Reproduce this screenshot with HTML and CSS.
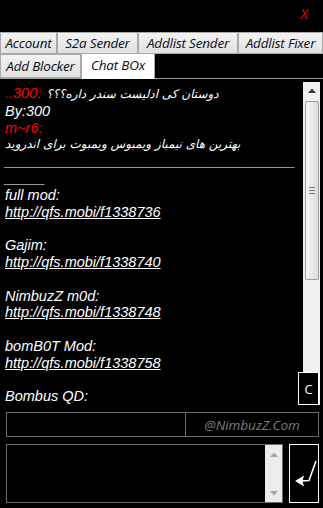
FILE: index.html
```html
<!DOCTYPE html>
<html>
<head>
<meta charset="utf-8">
<link rel="stylesheet" href="styles.css">
</head>
<body>
<div class="titlebar"><span class="close">X</span></div>
<div class="tabs-row1">
  <div class="tab">Account</div>
  <div class="tab">S2a Sender</div>
  <div class="tab">Addlist Sender</div>
  <div class="tab">Addlist Fixer</div>
</div>
<div class="tabs-row2">
  <div class="tab tab-blocker">Add Blocker</div>
  <div class="tab tab-active">Chat BOx</div>
</div>
<div class="chat">
  <div class="log">
    <div class="msgline"><span class="red ltr">..300:</span><span class="fa" dir="rtl">دوستان کی ادلیست سندر داره؟؟؟</span></div>
    <div>By:300</div>
    <div><span class="red">m~r6:</span></div>
    <div class="msgline"><span class="fa" dir="rtl">بهترین های نیمباز ویمبوس ویمبوت برای اندروید</span></div>
    <div class="rule">_________________________________________</div>
    <div>full mod:</div>
    <div><a class="link">http://qfs.mobi/f1338736</a></div>
    <div class="blank"></div>
    <div>Gajim:</div>
    <div><a class="link">http://qfs.mobi/f1338740</a></div>
    <div class="blank"></div>
    <div>NimbuzZ m0d:</div>
    <div><a class="link">http://qfs.mobi/f1338748</a></div>
    <div class="blank"></div>
    <div>bomB0T Mod:</div>
    <div><a class="link">http://qfs.mobi/f1338758</a></div>
    <div class="blank"></div>
    <div>Bombus QD:</div>
  </div>
  <div class="vscroll">
    <div class="sb-btn"><svg width="8" height="5" viewBox="0 0 8 5"><path d="M0 5 L4 0.5 L8 5 Z" fill="#3a3a3a"/></svg></div>
    <div class="thumb"><span class="grip"></span><span class="grip"></span><span class="grip"></span></div>
  </div>
  <div class="cbtn">C</div>
</div>
<div class="nick">
  <div class="nick-left"></div>
  <div class="nick-right">@NimbuzZ.Com</div>
</div>
<div class="compose">
  <div class="msg">
    <div class="msg-sb">
      <svg width="8" height="5" viewBox="0 0 8 5"><path d="M0 5 L4 0.5 L8 5 Z" fill="#a6a6a6"/></svg>
      <svg width="8" height="5" viewBox="0 0 8 5"><path d="M0 0 L4 4.5 L8 0 Z" fill="#a6a6a6"/></svg>
    </div>
  </div>
  <div class="send">
    <svg width="28" height="57" viewBox="0 0 28 57">
      <path d="M5 36 L14 30.5 L12.5 36 L14 41.5 Z" fill="#fff"/>
      <path d="M12 36 L19 35.5 L26 16" fill="none" stroke="#fff" stroke-width="1.6"/>
    </svg>
  </div>
</div>
</body>
</html>
```
FILE: styles.css
```css
* { box-sizing: border-box; }
body {
  margin: 0;
  width: 323px;
  height: 508px;
  overflow: hidden;
  background: #000;
  font-family: "Liberation Sans", Arial, sans-serif;
}
.titlebar {
  height: 32px;
  display: flex;
  justify-content: flex-end;
  padding: 3px 15px 0 0;
}
.close {
  color: #e00000;
  font: italic 15px/20px "Open Sans", sans-serif;
}
.tabs-row1 {
  display: grid;
  grid-template-columns: 57px 81px 100px 1fr;
  height: 22px;
}
.tab {
  border: 1px solid #a9a9a9;
  background: linear-gradient(#f3f3f3, #e0e0e0);
  color: #0a0a14;
  font: italic 13.5px "Open Sans", sans-serif;
  letter-spacing: -0.2px;
  display: flex;
  align-items: center;
  justify-content: center;
  white-space: nowrap;
}
.tabs-row2 {
  display: flex;
  height: 25px;
  border-bottom: 1px solid #9a9a9a;
}
.tab-blocker {
  width: 81px;
  height: 24px;
}
.tab-active {
  width: 74px;
  height: 26px;
  margin-top: -1px;
  background: #fff;
  border-bottom: none;
  padding-bottom: 3px;
}
.chat {
  position: relative;
  height: 326px;
  display: flex;
}
.log {
  flex: 1;
  padding: 6px 3px 0 5px;
  color: #fff;
  font: italic 14.5px/16.8px "Liberation Sans", Arial, sans-serif;
  overflow: hidden;
}
.msgline {
  display: flex;
  justify-content: flex-start;
  align-items: baseline;
  gap: 5px;
  direction: ltr;
}
.ltr {
  direction: ltr;
  unicode-bidi: bidi-override;
}
.red { color: #ff0000; }
.fa {
  font-family: "DejaVu Sans", sans-serif;
  font-size: 12px;
  color: #fff;
}
.rule { word-break: break-all; }
.blank { height: 16.8px; }
.link { color: #fff; text-decoration: underline; }
.vscroll {
  width: 17px;
  margin: 3px 3px 0 0;
  background: #f0f0f0;
  display: flex;
  flex-direction: column;
}
.sb-btn {
  height: 17px;
  display: flex;
  align-items: center;
  justify-content: center;
}
.thumb {
  height: 179px;
  margin: 2px 1px 0 2px;
  border: 1px solid #9d9d9d;
  border-radius: 2px;
  background: linear-gradient(90deg, #f6f6f6, #dcdcdc);
  display: flex;
  flex-direction: column;
  align-items: center;
  justify-content: center;
  gap: 2px;
}
.grip {
  width: 6px;
  height: 1px;
  background: #7a7a7a;
}
.cbtn {
  position: absolute;
  left: 298px;
  top: 293px;
  width: 21px;
  height: 33px;
  border: 1px solid #fff;
  background: #000;
  color: #fff;
  font: 13px "Open Sans", sans-serif;
  display: flex;
  align-items: center;
  justify-content: center;
}
.nick {
  margin: 7px 4px 0 6px;
  height: 25px;
  border: 1px solid #6a6a6a;
  display: flex;
}
.nick-left {
  width: 179px;
  border-right: 1px solid #6a6a6a;
}
.nick-right {
  flex: 1;
  color: #7c7c7c;
  font: italic 13.5px "Open Sans", sans-serif;
  display: flex;
  align-items: center;
  justify-content: center;
}
.compose {
  margin: 7px 4px 0 6px;
  height: 59px;
  display: flex;
  gap: 6px;
}
.msg {
  flex: 1;
  border: 1px solid #6a6a6a;
  display: flex;
  justify-content: flex-end;
}
.msg-sb {
  width: 17px;
  background: #ececec;
  display: flex;
  flex-direction: column;
  align-items: center;
  justify-content: space-between;
  padding: 7px 0 6px;
}
.send {
  width: 30px;
  border: 1px solid #fff;
}
```
